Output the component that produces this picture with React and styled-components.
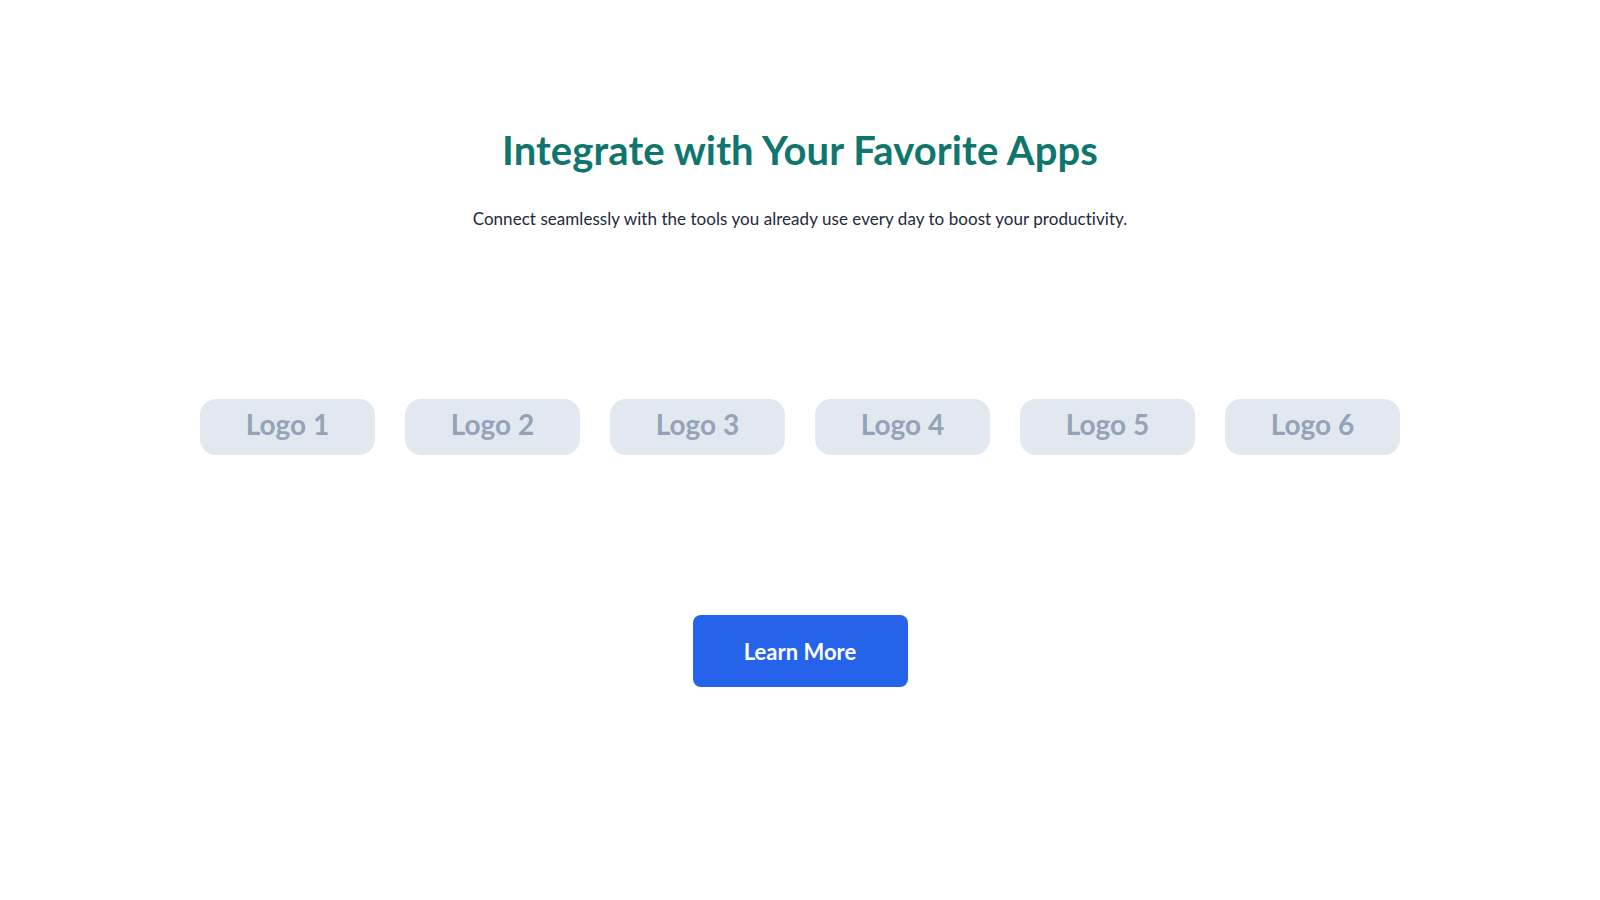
import React from "react";
import styled, { createGlobalStyle } from "styled-components";

const GlobalStyle = createGlobalStyle`
  * { box-sizing: border-box; }
  body {
    margin: 0;
    background: #ffffff;
    font-family: "Lato", "Noto Sans", sans-serif;
  }
`;

const Section = styled.section`
  display: flex;
  flex-direction: column;
  align-items: center;
  padding: 126px 0 0;
  min-height: 900px;
`;

const Title = styled.h1`
  margin: 0;
  font-family: "Lato", sans-serif;
  font-size: 40px;
  line-height: 48px;
  font-weight: 700;
  color: #0f766e;
  letter-spacing: 0.1px;
`;

const Subtitle = styled.p`
  margin: 33px 0 0;
  font-family: "Lato", sans-serif;
  font-size: 17px;
  line-height: 24px;
  color: #1e293b;
  letter-spacing: 0.05px;
`;

const LogoRow = styled.div`
  display: flex;
  gap: 30px;
  margin-top: 168px;
`;

const LogoBox = styled.div`
  width: 175px;
  height: 56px;
  border-radius: 16px;
  background: #e2e8f0;
  display: flex;
  align-items: center;
  justify-content: center;
  font-family: "Lato", sans-serif;
  font-size: 28px;
  font-weight: 700;
  color: #94a3b8;
  padding-bottom: 6px;
`;

const Button = styled.button`
  margin-top: 160px;
  width: 215px;
  height: 72px;
  border: none;
  border-radius: 8px;
  background: #2563eb;
  color: #ffffff;
  font-family: "Lato", sans-serif;
  font-size: 22px;
  font-weight: 700;
  cursor: pointer;
`;

const logos = ["Logo 1", "Logo 2", "Logo 3", "Logo 4", "Logo 5", "Logo 6"];

export default function App() {
  return (
    <>
      <GlobalStyle />
      <Section>
        <Title>Integrate with Your Favorite Apps</Title>
        <Subtitle>
          Connect seamlessly with the tools you already use every day to boost your productivity.
        </Subtitle>
        <LogoRow>
          {logos.map((l) => (
            <LogoBox key={l}>{l}</LogoBox>
          ))}
        </LogoRow>
        <Button>Learn More</Button>
      </Section>
    </>
  );
}
